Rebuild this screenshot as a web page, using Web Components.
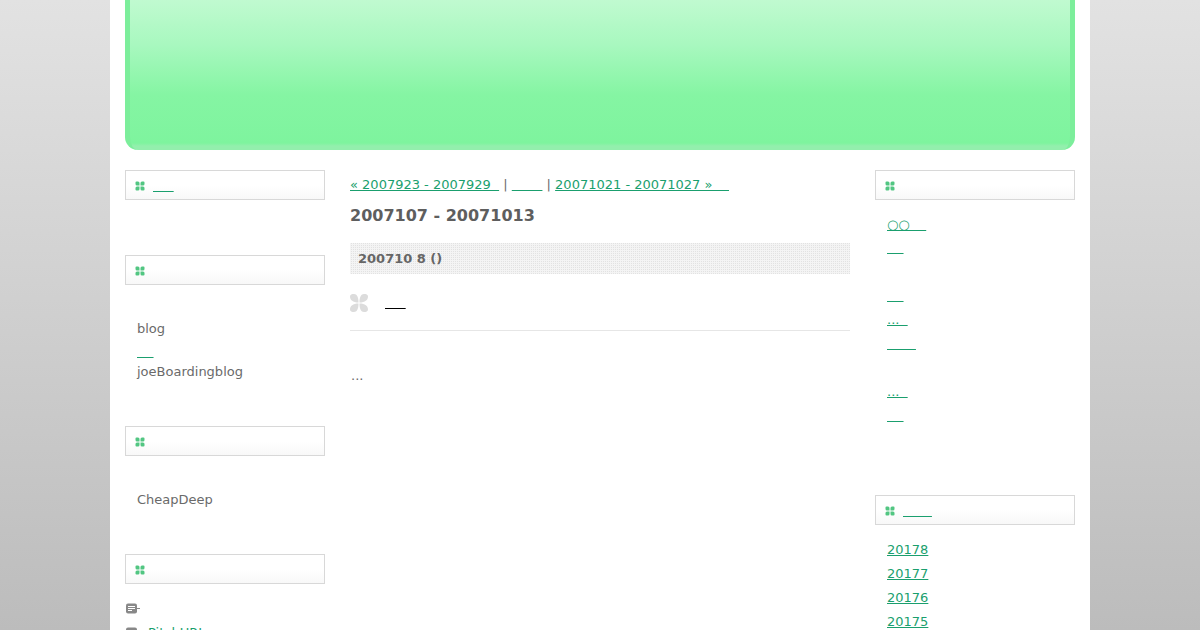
<!DOCTYPE html>
<html>
<head>
<meta charset="utf-8">
<style>
  html, body { margin: 0; height: 630px; overflow: hidden; }
  body {
    background: linear-gradient(#e2e2e2, #bcbcbc);
    font-family: "DejaVu Sans", sans-serif;
    font-size: 13px;
    color: #6a6a6a;
  }
  .txt { margin-left: 12px; }
</style>
</head>
<body>
<blog-page>
  <blog-header></blog-header>
  <blog-column slot="left">
    <side-box label="&nbsp;&nbsp;&nbsp;&nbsp;&nbsp;" gap="55"></side-box>
    <side-box gap="44">
      <div class="txt" style="height:20px;line-height:20px;margin-top:34px">blog</div>
      <div class="txt" style="height:22px;line-height:23px;margin-top:1px"><u style="color:#1a9f6e">&nbsp;&nbsp;&nbsp;&nbsp;</u></div>
      <div class="txt" style="height:20px;line-height:20px">joeBoardingblog</div>
    </side-box>
    <side-box gap="44">
      <div class="txt" style="height:20px;line-height:20px;margin-top:34px">CheapDeep</div>
    </side-box>
    <side-box gap="0">
      <trackback-row></trackback-row>
      <trackback-row link="PitchURL&nbsp;&nbsp;&nbsp;"></trackback-row>
    </side-box>
  </blog-column>
  <blog-entry slot="main"></blog-entry>
  <blog-column slot="right">
    <side-box gap="67">
      <link-list top="13" first="23" items="○○&nbsp;&nbsp;&nbsp;&nbsp;|&nbsp;&nbsp;&nbsp;&nbsp;|-|&nbsp;&nbsp;&nbsp;&nbsp;|...&nbsp;&nbsp;|&nbsp;&nbsp;&nbsp;&nbsp;&nbsp;&nbsp;&nbsp;|-|...&nbsp;&nbsp;|&nbsp;&nbsp;&nbsp;&nbsp;"></link-list>
    </side-box>
    <side-box label="&nbsp;&nbsp;&nbsp;&nbsp;&nbsp;&nbsp;&nbsp;" gap="0">
      <link-list top="13" items="20178|20177|20176|20175"></link-list>
    </side-box>
  </blog-column>
</blog-page>

<script>
const CLOVER = `<svg viewBox="0 0 10 10" width="10" height="10" fill="currentColor"><path d="M.5 1.500a1 1 0 0 1 1-1h1.500a1.500 1.500 0 0 1 1.500 1.500v2.500H2a1.500 1.500 0 0 1-1.500-1.500zM9.500 1.500a1 1 0 0 0-1-1H7a1.500 1.500 0 0 0-1.500 1.500v2.500H8a1.500 1.500 0 0 0 1.500-1.500zM.5 8.500a1 1 0 0 0 1 1h1.500a1.500 1.500 0 0 0 1.500-1.500V5.500H2a1.500 1.500 0 0 0-1.500 1.500zM9.500 8.500a1 1 0 0 1-1 1H7a1.500 1.500 0 0 1-1.500-1.500V5.500H8a1.500 1.500 0 0 1 1.500 1.500z"/></svg>`;

class BlogPage extends HTMLElement {
  connectedCallback() {
    this.attachShadow({ mode: 'open' }).innerHTML = `
    <style>
      :host { display: block; width: 950px; height: 630px; margin: 0 auto; padding: 0 15px; background: #fff; overflow: hidden; opacity: .999; }
      .cols { display: grid; grid-template-columns: 200px 500px 200px; column-gap: 25px; padding-top: 20px; }
    </style>
    <slot></slot>
    <div class="cols">
      <div><slot name="left"></slot></div>
      <div><slot name="main"></slot></div>
      <div><slot name="right"></slot></div>
    </div>`;
  }
}

class BlogHeader extends HTMLElement {
  connectedCallback() {
    this.attachShadow({ mode: 'open' }).innerHTML = `
    <style>
      :host {
        display: block; height: 150px; box-sizing: border-box;
        border: solid #7cee9b; border-width: 0 5px 0;
        border-radius: 0 0 13px 13px;
        background: linear-gradient(#c0fad0 0, #a8f8bf 45px, #85f5a3 95px, #7ef49e 143px, #93efad 146px);
      }
    </style>`;
  }
}

class BlogColumn extends HTMLElement {
  connectedCallback() {
    this.attachShadow({ mode: 'open' }).innerHTML = `
    <style>:host { display: block; }</style><slot></slot>`;
  }
}

class SideBox extends HTMLElement {
  connectedCallback() {
    const label = this.getAttribute('label');
    const gap = this.getAttribute('gap') || 0;
    this.attachShadow({ mode: 'open' }).innerHTML = `
    <style>
      :host { display: block; padding-bottom: ${gap}px; }
      .title {
        height: 30px; box-sizing: border-box; display: flex; align-items: center; gap: 8px;
        padding: 0 0 0 9px; border: 1px solid #d8d8d8;
        background: linear-gradient(#fff 50%, #f8f8f8);
      }
      .ico { color: #52c682; height: 10px; margin-top: -3px; }
      a { color: #1a9f6e; }
    </style>
    <div class="title">
      <span class="ico">${CLOVER}</span>
      ${label ? `<a href="#">${label}</a>` : ''}
    </div>
    <slot></slot>`;
  }
}

class LinkList extends HTMLElement {
  connectedCallback() {
    const items = this.getAttribute('items').split('|');
    const top = this.getAttribute('top') || 0;
    const first = this.getAttribute('first') || 24;
    const rows = items.map(t => t === '-'
      ? '<li></li>'
      : `<li><a href="#">${t}</a></li>`).join('');
    this.attachShadow({ mode: 'open' }).innerHTML = `
    <style>
      :host { display: block; padding: ${top}px 0 0 12px; }
      ul { list-style: none; margin: 0; padding: 0; }
      li { height: 24px; line-height: 24px; }
      li:first-child { height: ${first}px; }
      a { color: #1a9f6e; }
    </style>
    <ul>${rows}</ul>`;
  }
}

class TrackbackRow extends HTMLElement {
  connectedCallback() {
    const link = this.getAttribute('link');
    this.attachShadow({ mode: 'open' }).innerHTML = `
    <style>
      :host { display: flex; align-items: center; gap: 7px; height: 24px; }
      :host(:first-child) { margin-top: 12px; }
      svg { flex: none; }
      a { color: #1a9f6e; }
    </style>
    <svg width="16" height="11" viewBox="0 0 16 11">
      <rect x="1" y="0.500" width="11" height="10" rx="2" fill="#888"/>
      <path d="M3 3.500h7M3 5.500h7M3 7.500h4" stroke="#fff" stroke-width="1"/>
      <path d="M12 5.500h3" stroke="#888" stroke-width="1"/>
    </svg>
    ${link ? `<a href="#">${link}</a>` : ''}`;
  }
}

class BlogEntry extends HTMLElement {
  connectedCallback() {
    this.attachShadow({ mode: 'open' }).innerHTML = `
    <style>
      :host { display: block; }
      a { color: #1a9f6e; }
      .nav { height: 16px; line-height: 16px; margin-top: 7px; white-space: nowrap; }
      .blank { letter-spacing: -.3px; }
      h2 { font-size: 16px; line-height: 20px; margin: 13px 0 0; color: #5e5e5e; }
      .day {
        height: 31px; box-sizing: border-box; margin-top: 17px; padding-left: 8px;
        line-height: 31px; font-weight: bold; color: #666;
        background-color: #f4f4f4;
        background-image: conic-gradient(#e2e2e2 25%, #f4f4f4 0);
        background-size: 2px 2px;
      }
      .head {
        display: flex; align-items: flex-start; gap: 17px; height: 42px; margin-top: 15px;
        border-bottom: 1px solid #e6e6e6; box-sizing: border-box;
      }
      .head svg { color: #dcdcdc; flex: none; margin-top: 5px; }
      .head u { color: #000; margin-top: 6px; }
      .body { margin-top: 35px; line-height: 20px; padding-left: 1px; }
    </style>
    <div class="nav"><a href="#">« 2007923 - 2007929&nbsp;&nbsp;</a> | <a class="blank" href="#">&nbsp;&nbsp;&nbsp;&nbsp;&nbsp;&nbsp;&nbsp;&nbsp;</a> | <a href="#">20071021 - 20071027 »&nbsp;&nbsp;&nbsp;&nbsp;</a></div>
    <h2>2007107 - 20071013</h2>
    <div class="day">200710 8 ()</div>
    <div class="head">
      <svg width="18" height="18" viewBox="0 0 18 18" fill="currentColor">
        <path d="M0 2.500C0 .5 2 0 4 0c3 0 4.500 3 4.500 8.500C3 8.500 0 6 0 2.500zM18 2.500C18 .5 16 0 14 0c-3 0-4.500 3-4.500 8.500C15 8.500 18 6 18 2.500zM0 15.500C0 12 3 9.500 8.500 9.500 8.500 15 7 18 4 18c-2 0-4-.5-4-2.500zM18 15.500C18 12 15 9.500 9.500 9.500 9.500 15 11 18 14 18c2 0 4-.5 4-2.500z"/>
      </svg>
      <u>&nbsp;&nbsp;&nbsp;&nbsp;&nbsp;</u>
    </div>
    <div class="body">...</div>`;
  }
}

customElements.define('blog-page', BlogPage);
customElements.define('blog-header', BlogHeader);
customElements.define('blog-column', BlogColumn);
customElements.define('side-box', SideBox);
customElements.define('link-list', LinkList);
customElements.define('trackback-row', TrackbackRow);
customElements.define('blog-entry', BlogEntry);
</script>
</body>
</html>
